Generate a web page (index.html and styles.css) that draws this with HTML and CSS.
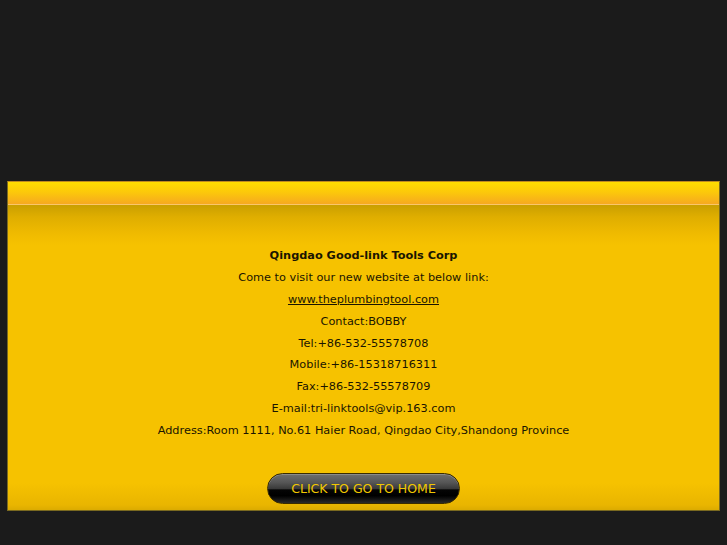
FILE: index.html
```html
<!DOCTYPE html>
<html>
<head>
<meta charset="utf-8">
<link rel="stylesheet" href="styles.css">
</head>
<body>
<div class="box">
  <div class="header"></div>
  <div class="main">
    <div class="info">
      <p class="title">Qingdao Good-link Tools Corp</p>
      <p>Come to visit our new website at below link:</p>
      <p><a href="#">www.theplumbingtool.com</a></p>
      <p>Contact:BOBBY</p>
      <p>Tel:+86-532-55578708</p>
      <p>Mobile:+86-15318716311</p>
      <p>Fax:+86-532-55578709</p>
      <p>E-mail:tri-linktools@vip.163.com</p>
      <p>Address:Room 1111, No.61 Haier Road, Qingdao City,Shandong Province</p>
    </div>
    <a class="btn" href="#">CLICK TO GO TO HOME</a>
  </div>
</div>
</body>
</html>
```
FILE: styles.css
```css
html, body {
  margin: 0;
  padding: 0;
  background: #1b1b1b;
  height: 100%;
}
body {
  font-family: "DejaVu Sans", Verdana, sans-serif;
}
.box {
  margin: 181px 0 0 7px;
  width: 711px;
  border: 1px solid #7a6a20;
  border-top-color: #c08a20;
}
.header {
  height: 22px;
  background: linear-gradient(to bottom, #ffdd00 0%, #fcc90a 45%, #f6a920 100%);
  border-bottom: 1px solid #f9c66a;
}
.main {
  background: linear-gradient(to bottom, #c99f00 0px, #dfae00 12px, #efba00 28px, #f6c200 40px, #f6c200 278px, #e9b500 300px, #dcab00 305px);
  padding: 40px 0 6px;
  display: flex;
  flex-direction: column;
  align-items: center;
}
.info {
  text-align: center;
  font-size: 11.3px;
  line-height: 21.875px;
  color: #1a1500;
}
.info p {
  margin: 0;
}
.info a {
  color: #1a1500;
  text-decoration: underline;
}
.title {
  font-weight: bold;
}
.btn {
  margin-top: 31px;
  width: 191px;
  height: 29px;
  border: 1px solid #3a2c00;
  border-radius: 16px;
  background: linear-gradient(to bottom, #6e6e6e 0%, #555 30%, #3a3a3a 50%, #050505 55%, #000 75%, #2a2a2a 100%);
  box-shadow: inset 0 1px 0 #8a8a8a;
  color: #f2c800;
  font-size: 12.5px;
  line-height: 29px;
  text-align: center;
  text-decoration: none;
}
```
